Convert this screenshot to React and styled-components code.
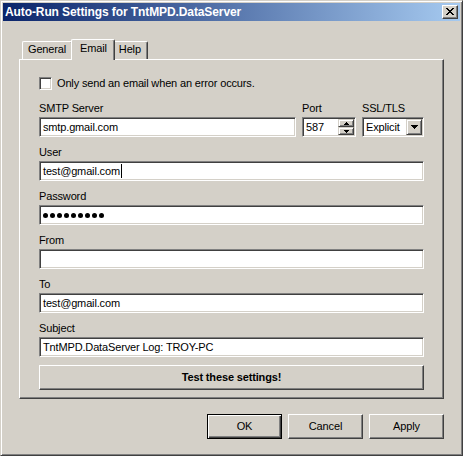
import React from "react";
import styled, { createGlobalStyle } from "styled-components";

const face = "#d4d0c8";

const GlobalStyle = createGlobalStyle`
  html, body {
    margin: 0;
    padding: 0;
    background: ${face};
  }
  body {
    font-family: "Liberation Sans", Arial, sans-serif;
    font-size: 11px;
    letter-spacing: -0.15px;
    color: #000;
  }
  * {
    box-sizing: border-box;
  }
`;

const Window = styled.div`
  width: 463px;
  height: 456px;
  background: ${face};
  border: 1px solid;
  border-color: ${face} #404040 #404040 ${face};
  box-shadow: inset 1px 1px #fff, inset -1px -1px #808080;
  padding: 2px;
  display: flex;
  flex-direction: column;
`;

const TitleBar = styled.div`
  height: 18px;
  background: linear-gradient(to right, #0a246a, #a6caf0);
  display: flex;
  align-items: center;
  justify-content: space-between;
  padding: 0 2px 0 2px;
`;

const Title = styled.span`
  color: #fff;
  font-weight: bold;
  font-size: 12px;
  letter-spacing: -0.1px;
  line-height: 18px;
  white-space: nowrap;
`;

const CloseButton = styled.div`
  width: 16px;
  height: 14px;
  background: ${face};
  border: 1px solid;
  border-color: #fff #404040 #404040 #fff;
  box-shadow: inset -1px -1px #808080;
  display: flex;
  align-items: center;
  justify-content: center;
  padding: 0 1px 1px 0;
`;

const Body = styled.div`
  padding: 18px 16px 0 16px;
  display: flex;
  flex-direction: column;
`;

const TabRow = styled.div`
  height: 21px;
  display: flex;
  align-items: flex-start;
  padding-left: 3px;
  margin-bottom: -1px;
  position: relative;
  z-index: 2;
`;

const Tab = styled.div`
  margin-top: ${(p) => (p.$active ? "0" : "2px")};
  height: ${(p) => (p.$active ? "21px" : "18px")};
  margin-left: ${(p) => (p.$active ? "-2px" : "0")};
  margin-right: ${(p) => (p.$active ? "-2px" : "0")};
  padding: ${(p) => (p.$active ? "0 7px 0 8px" : "0 6px 0 5px")};
  background: ${face};
  border-top: 1px solid #fff;
  border-left: 1px solid #fff;
  border-right: 1px solid #404040;
  box-shadow: inset -1px 0 #808080;
  border-radius: 2px 2px 0 0;
  line-height: ${(p) => (p.$active ? "16px" : "15px")};
  position: relative;
  z-index: ${(p) => (p.$active ? 2 : 1)};
`;

const Panel = styled.div`
  position: relative;
  z-index: 1;
  border: 1px solid;
  border-color: #fff #404040 #404040 #fff;
  box-shadow: inset -1px -1px #808080;
  padding: 17px 19px 8px 19px;
  display: flex;
  flex-direction: column;
`;

const CheckRow = styled.label`
  display: flex;
  align-items: center;
  gap: 5px;
  height: 13px;
  line-height: 13px;
  margin-bottom: 12px;
`;

const CheckBox = styled.span`
  width: 13px;
  height: 13px;
  background: #fff;
  border: 1px solid;
  border-color: #808080 #fff #fff #808080;
  box-shadow: inset 1px 1px #404040, inset -1px -1px ${face};
`;

const FieldRow = styled.div`
  display: grid;
  grid-template-columns: 257px 54px 62px;
  column-gap: 6px;
`;

const Group = styled.div`
  display: flex;
  flex-direction: column;
  margin-bottom: ${(p) => (p.$last ? "0" : "9px")};
`;

const Label = styled.div`
  line-height: 13px;
  height: 13px;
  margin-bottom: 2px;
  white-space: nowrap;
`;

const Field = styled.div`
  height: 20px;
  background: #fff;
  border: 1px solid;
  border-color: #808080 #fff #fff #808080;
  box-shadow: inset 1px 1px #404040, inset -1px -1px ${face};
  padding: 1px 1px 1px 2px;
  display: flex;
  align-items: center;
  line-height: 16px;
  white-space: nowrap;
  overflow: hidden;
`;

const FieldText = styled.span`
  flex: 1;
  line-height: 16px;
  padding-left: 1px;
`;

const Caret = styled.span`
  display: inline-block;
  width: 1px;
  height: 14px;
  background: #000;
  vertical-align: -3px;
  margin-left: 1px;
`;

const Dots = styled.div`
  display: flex;
  gap: 2px;
  padding-left: 1px;
`;

const Dot = styled.span`
  width: 5px;
  height: 5px;
  border-radius: 50%;
  background: #000;
`;

const Spinner = styled.div`
  width: 16px;
  height: 16px;
  display: flex;
  flex-direction: column;
`;

const SpinButton = styled.div`
  flex: 1;
  background: ${face};
  border: 1px solid;
  border-color: ${face} #404040 #404040 ${face};
  box-shadow: inset 1px 1px #fff, inset -1px -1px #808080;
  display: flex;
  align-items: center;
  justify-content: center;
`;

const DropButton = styled.div`
  width: 16px;
  height: 16px;
  background: ${face};
  border: 1px solid;
  border-color: ${face} #404040 #404040 ${face};
  box-shadow: inset 1px 1px #fff, inset -1px -1px #808080;
  display: flex;
  align-items: center;
  justify-content: center;
`;

const Button = styled.div`
  height: 25px;
  width: 75px;
  background: ${face};
  border: 1px solid;
  border-color: ${(p) => (p.$default ? "#000" : "#fff #404040 #404040 #fff")};
  box-shadow: ${(p) =>
    p.$default
      ? "inset 1px 1px #fff, inset -1px -1px #404040, inset -2px -2px #808080"
      : "inset -1px -1px #808080"};
  display: flex;
  align-items: center;
  justify-content: center;
  font-weight: ${(p) => (p.$bold ? "bold" : "normal")};
  padding-bottom: 1px;
`;

const TestButton = styled(Button)`
  margin-top: 8px;
  width: 100%;
`;

const Footer = styled.div`
  display: flex;
  justify-content: flex-end;
  gap: 6px;
  margin-top: 15px;
`;

const CloseGlyph = () => (
  <svg width="8" height="7" viewBox="0 0 8 7" shapeRendering="crispEdges">
    <path
      d="M0 0h2v1H0zM6 0h2v1H6zM1 1h2v1H1zM5 1h2v1H5zM2 2h4v1H2zM3 3h2v1H3zM2 4h4v1H2zM1 5h2v1H1zM5 5h2v1H5zM0 6h2v1H0zM6 6h2v1H6z"
      fill="#000"
    />
  </svg>
);

const UpArrow = () => (
  <svg width="5" height="3" viewBox="0 0 5 3" shapeRendering="crispEdges">
    <path d="M2 0h1v1H2zM1 1h3v1H1zM0 2h5v1H0z" fill="#000" />
  </svg>
);

const DownArrow = ({ w = 5 }) =>
  w === 7 ? (
    <svg width="7" height="4" viewBox="0 0 7 4" shapeRendering="crispEdges">
      <path d="M0 0h7v1H0zM1 1h5v1H1zM2 2h3v1H2zM3 3h1v1H3z" fill="#000" />
    </svg>
  ) : (
    <svg width="5" height="3" viewBox="0 0 5 3" shapeRendering="crispEdges">
      <path d="M0 0h5v1H0zM1 1h3v1H1zM2 2h1v1H2z" fill="#000" />
    </svg>
  );

const fields = [
  { label: "User", value: "test@gmail.com", caret: true },
  { label: "Password", password: 9 },
  { label: "From", value: "" },
  { label: "To", value: "test@gmail.com" },
  { label: "Subject", value: "TntMPD.DataServer Log: TROY-PC", last: true },
];

export default function App() {
  return (
    <>
      <GlobalStyle />
      <Window>
        <TitleBar>
          <Title>Auto-Run Settings for TntMPD.DataServer</Title>
          <CloseButton>
            <CloseGlyph />
          </CloseButton>
        </TitleBar>
        <Body>
          <TabRow>
            <Tab>General</Tab>
            <Tab $active>Email</Tab>
            <Tab>Help</Tab>
          </TabRow>
          <Panel>
            <CheckRow>
              <CheckBox />
              <span>Only send an email when an error occurs.</span>
            </CheckRow>
            <FieldRow>
              <Group>
                <Label>SMTP Server</Label>
                <Field>
                  <FieldText>smtp.gmail.com</FieldText>
                </Field>
              </Group>
              <Group>
                <Label>Port</Label>
                <Field>
                  <FieldText>587</FieldText>
                  <Spinner>
                    <SpinButton>
                      <UpArrow />
                    </SpinButton>
                    <SpinButton>
                      <DownArrow />
                    </SpinButton>
                  </Spinner>
                </Field>
              </Group>
              <Group>
                <Label>SSL/TLS</Label>
                <Field>
                  <FieldText>Explicit</FieldText>
                  <DropButton>
                    <DownArrow w={7} />
                  </DropButton>
                </Field>
              </Group>
            </FieldRow>
            {fields.map((f) => (
              <Group key={f.label} $last={f.last}>
                <Label>{f.label}</Label>
                <Field>
                  {f.password ? (
                    <Dots>
                      {Array.from({ length: f.password }).map((_, i) => (
                        <Dot key={i} />
                      ))}
                    </Dots>
                  ) : (
                    <FieldText>
                      {f.value}
                      {f.caret && <Caret />}
                    </FieldText>
                  )}
                </Field>
              </Group>
            ))}
            <TestButton $bold>Test these settings!</TestButton>
          </Panel>
          <Footer>
            <Button $default>OK</Button>
            <Button>Cancel</Button>
            <Button>Apply</Button>
          </Footer>
        </Body>
      </Window>
    </>
  );
}
